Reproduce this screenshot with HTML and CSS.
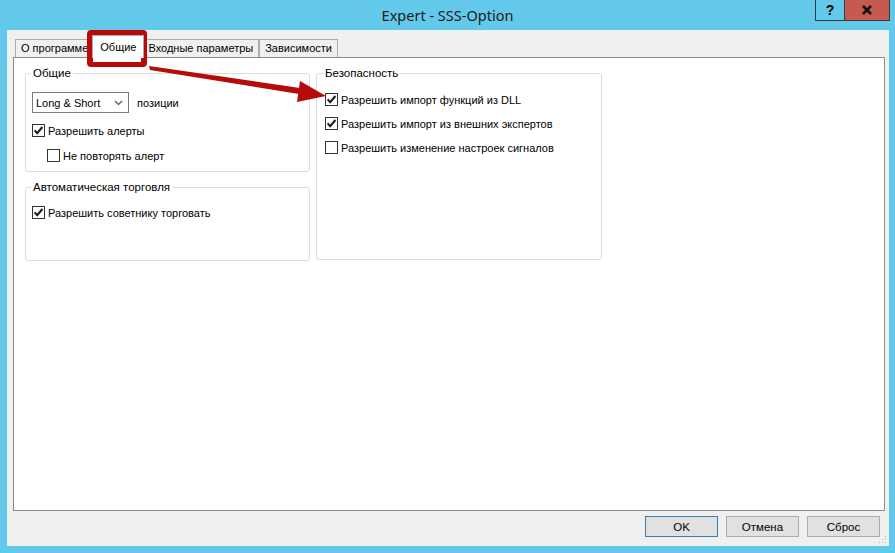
FILE: index.html
```html
<!DOCTYPE html>
<html lang="ru">

<head>
    <meta charset="UTF-8">
    <title>Expert - SSS-Option</title>
    <link rel="stylesheet" href="styles.css">
</head>

<body>

    <div class="titlebar">
        <div></div>
        <div class="title">Expert - SSS-Option</div>
        <div class="caption-buttons">
            <span class="cap-btn cap-help">?</span>
            <span class="cap-btn cap-close">
                <svg width="12" height="10" viewBox="0 0 12 10"><path d="M2 1 L10 9 M10 1 L2 9" stroke="#111" stroke-width="2.6" /></svg>
            </span>
        </div>
    </div>

    <div class="client">
        <div class="tabs">
            <div class="tab">О программе</div>
            <div class="tab active">Общие</div>
            <div class="tab">Входные параметры</div>
            <div class="tab">Зависимости</div>
        </div>

        <div class="panel">
            <div class="column">
                <fieldset class="group group-common">
                    <legend>Общие</legend>
                    <div class="combo-row">
                        <div class="combo">
                            <span>Long &amp; Short</span>
                            <svg width="9" height="6" viewBox="0 0 9 6"><path d="M1 1 L4.5 4.5 L8 1" stroke="#555" stroke-width="1.2" fill="none" /></svg>
                        </div>
                        <span>позиции</span>
                    </div>
                    <label class="check checked first">Разрешить алерты</label>
                    <label class="check sub">Не повторять алерт</label>
                </fieldset>

                <fieldset class="group group-auto">
                    <legend>Автоматическая торговля</legend>
                    <label class="check checked first">Разрешить советнику торговать</label>
                </fieldset>
            </div>

            <fieldset class="group group-security">
                <legend>Безопасность</legend>
                <label class="check checked first">Разрешить импорт функций из DLL</label>
                <label class="check checked">Разрешить импорт из внешних экспертов</label>
                <label class="check">Разрешить изменение настроек сигналов</label>
            </fieldset>
        </div>

        <div class="buttons">
            <button class="default">OK</button>
            <button>Отмена</button>
            <button>Сброс</button>
        </div>

        <svg class="grip" width="10" height="8" viewBox="0 0 10 8">
            <rect x="8" y="0" width="1" height="1" fill="#b8b8b8" />
            <rect x="5" y="3" width="1" height="1" fill="#b8b8b8" />
            <rect x="8" y="3" width="1" height="1" fill="#b8b8b8" />
            <rect x="2" y="6" width="1" height="1" fill="#b8b8b8" />
            <rect x="5" y="6" width="1" height="1" fill="#b8b8b8" />
            <rect x="8" y="6" width="1" height="1" fill="#b8b8b8" />
        </svg>
    </div>

    <!-- annotation drawn over the dialog -->
    <div class="highlight"></div>
    <svg class="arrow" width="895" height="553" viewBox="0 0 895 553">
        <polygon points="149,66 150,70 299,94 300,88" fill="#b50b0b" />
        <polygon points="326,96 300,81 297,102" fill="#b50b0b" />
    </svg>

</body>

</html>
```

FILE: styles.css
```css
body {
    margin: 0;
    width: 895px;
    height: 553px;
    overflow: hidden;
    position: relative;
    background-color: #63c9ea;
    font-family: 'Segoe UI', 'Liberation Sans', Arial, sans-serif;
    font-size: 11px;
    color: #000;
}

.titlebar {
    height: 30px;
    display: grid;
    grid-template-columns: 1fr auto 1fr;
    align-items: start;
}

.title {
    font-family: 'Noto Sans', 'Open Sans', sans-serif;
    font-size: 14.5px;
    line-height: 30px;
    color: #1b1b1b;
}

.caption-buttons {
    justify-self: end;
    display: flex;
    margin-right: 5px;
}

.cap-btn {
    height: 21px;
    box-sizing: border-box;
    border: 1px solid #3a3a3a;
    border-top: 0;
    display: flex;
    align-items: center;
    justify-content: center;
}

.cap-help {
    width: 29px;
    font-weight: bold;
    font-size: 14px;
    border-right: 0;
}

.cap-close {
    width: 46px;
    background-color: #c75a50;
}

.client {
    position: relative;
    margin: 0 6px 0 7px;
    height: 516px;
    box-sizing: border-box;
    padding: 9px 4px 0 6px;
    background-color: #f0f0f0;
    display: flex;
    flex-direction: column;
}

.tabs {
    display: flex;
    align-items: flex-end;
    height: 18px;
    padding-left: 2px;
}

.tab {
    height: 18px;
    box-sizing: border-box;
    border: 1px solid #acacac;
    border-bottom: 0;
    background-color: #f0f0f0;
    padding: 0 5px;
    line-height: 17px;
    white-space: nowrap;
}

.tab.active {
    position: relative;
    z-index: 1;
    height: 23px;
    margin: 0 -2px -1px;
    padding: 0 7px;
    line-height: 22px;
    background-color: #fff;
}

.panel {
    height: 454px;
    box-sizing: border-box;
    border: 1px solid #898c95;
    background-color: #fff;
    padding: 8px 0 0 11px;
    display: flex;
    align-items: flex-start;
    gap: 6px;
}

.column {
    display: flex;
    flex-direction: column;
    gap: 8px;
}

.group {
    margin: 0;
    padding: 0 6px;
    box-sizing: border-box;
    border: 1px solid #dcdcdc;
    border-radius: 3px;
}

.group legend {
    margin-left: -1px;
    padding: 0 2px;
    line-height: 15px;
    font-size: 11.5px;
}

.group-common {
    width: 285px;
    height: 106px;
}

.group-auto {
    width: 285px;
    height: 81px;
}

.group-security {
    width: 286px;
    height: 194px;
}

.group-security legend {
    margin-left: 0;
}

.group-security .check {
    margin-left: 2px;
}

.combo-row {
    display: flex;
    align-items: center;
    gap: 8px;
    margin-top: 11px;
}

.combo {
    width: 97px;
    height: 21px;
    box-sizing: border-box;
    border: 1px solid #7a7a7a;
    background-color: #fff;
    display: flex;
    align-items: center;
    justify-content: space-between;
    padding: 0 5px 0 3px;
}

.check {
    display: flex;
    align-items: center;
    height: 13px;
    margin-top: 11px;
    white-space: nowrap;
}

.check::before {
    content: '';
    width: 13px;
    height: 13px;
    box-sizing: border-box;
    border: 1px solid #333;
    background-color: #fff;
    margin-right: 3px;
    flex: none;
}

.check.checked::before {
    background: #fff url("data:image/svg+xml;utf8,<svg xmlns='http://www.w3.org/2000/svg' width='11' height='11' viewBox='0 0 11 11'><path d='M1.6 5.4 L4.2 8.2 L9.4 2' stroke='%231c1c1c' stroke-width='2.1' fill='none'/></svg>") no-repeat center;
}

.check.sub {
    margin-left: 15px;
    margin-top: 12px;
}

.group-security .check.first {
    margin-top: 12px;
}

.buttons {
    display: flex;
    justify-content: flex-end;
    gap: 8px;
    margin-top: 5px;
    margin-right: 5px;
}

.buttons button {
    width: 73px;
    height: 21px;
    box-sizing: border-box;
    border: 1px solid #adadad;
    background-color: #e1e1e1;
    font-family: inherit;
    font-size: 11.5px;
    color: #000;
    padding: 0;
}

.buttons button.default {
    border-color: #3c7fb1;
}

.grip {
    position: absolute;
    right: 2px;
    bottom: 2px;
}

.highlight {
    position: absolute;
    left: 87px;
    top: 30px;
    width: 60px;
    height: 37px;
    box-sizing: border-box;
    border: 6px solid #b70b0b;
    border-bottom-width: 5px;
    border-radius: 4px;
}

.arrow {
    position: absolute;
    left: 0;
    top: 0;
    pointer-events: none;
}
```
